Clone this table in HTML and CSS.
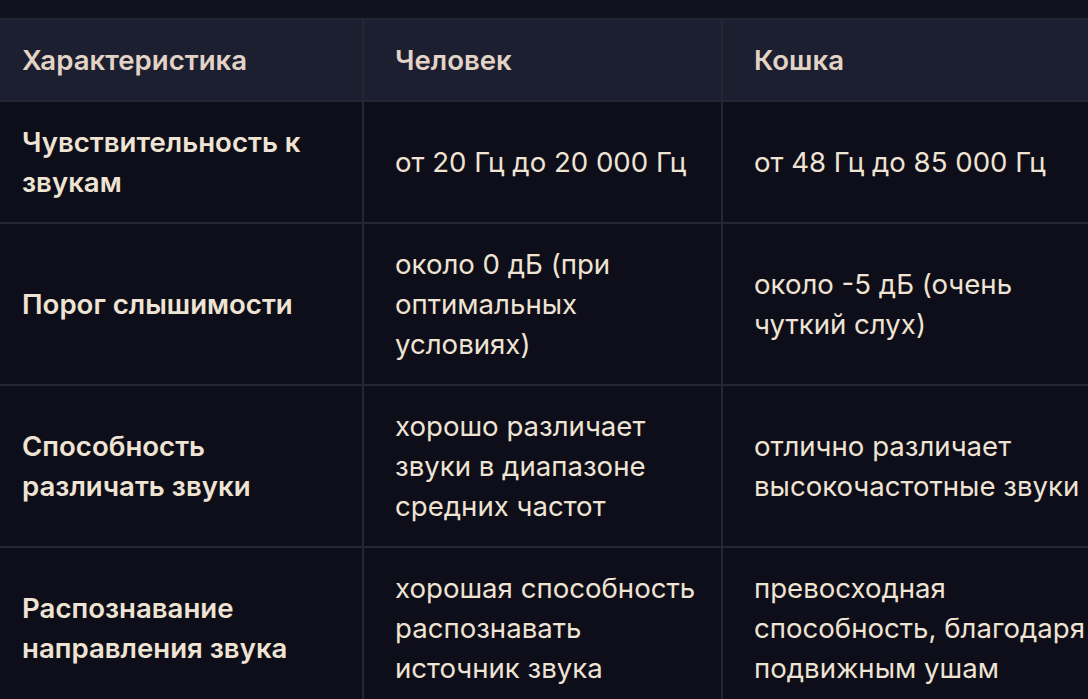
FILE: index.html
```html
<!DOCTYPE html>
<html lang="ru">
<head>
<meta charset="utf-8">
<link rel="stylesheet" href="styles.css">
</head>
<body>
<div class="wrap">
<table class="cmp">
<colgroup><col class="c1"><col class="c2"><col class="c3"></colgroup>
<thead>
<tr><th>Характеристика</th><th>Человек</th><th>Кошка</th></tr>
</thead>
<tbody>
<tr><td class="lbl">Чувствительность к звукам</td><td>от 20 Гц до 20 000 Гц</td><td>от 48 Гц до 85 000 Гц</td></tr>
<tr><td class="lbl">Порог слышимости</td><td>около 0 дБ (при оптимальных условиях)</td><td>около -5 дБ (очень чуткий слух)</td></tr>
<tr><td class="lbl">Способность различать звуки</td><td>хорошо различает звуки в диапазоне средних частот</td><td>отлично различает высокочастотные звуки</td></tr>
<tr><td class="lbl">Распознавание направления звука</td><td>хорошая способность распознавать источник звука</td><td>превосходная способность, благодаря подвижным ушам</td></tr>
</tbody>
</table>
</div>
</body>
</html>
```
FILE: styles.css
```css
html, body {
  margin: 0;
  padding: 0;
  background: #10121e;
  overflow: hidden;
}
.wrap {
  padding-top: 18px;
}
.cmp {
  border-collapse: collapse;
  table-layout: fixed;
  width: 1130px;
  margin-left: -11px;
  font-family: Inter, "Noto Sans", sans-serif;
  font-size: 27.6px;
  line-height: 40px;
  color: #efe3d4;
  background: #0d0e19;
}
.c1 { width: 373px; }
.c2 { width: 359px; }
.c3 { width: 398px; }
.cmp th, .cmp td {
  border: 2px solid #242631;
  padding: 20px 8px 20px 31px;
  text-align: left;
  vertical-align: middle;
}
.cmp th:first-child, .cmp td.lbl {
  padding-right: 31px;
}
.cmp th {
  background: #1b1f30;
  font-weight: 600;
  color: #e3d3c6;
}
.cmp td.lbl {
  font-weight: 600;
}
```
